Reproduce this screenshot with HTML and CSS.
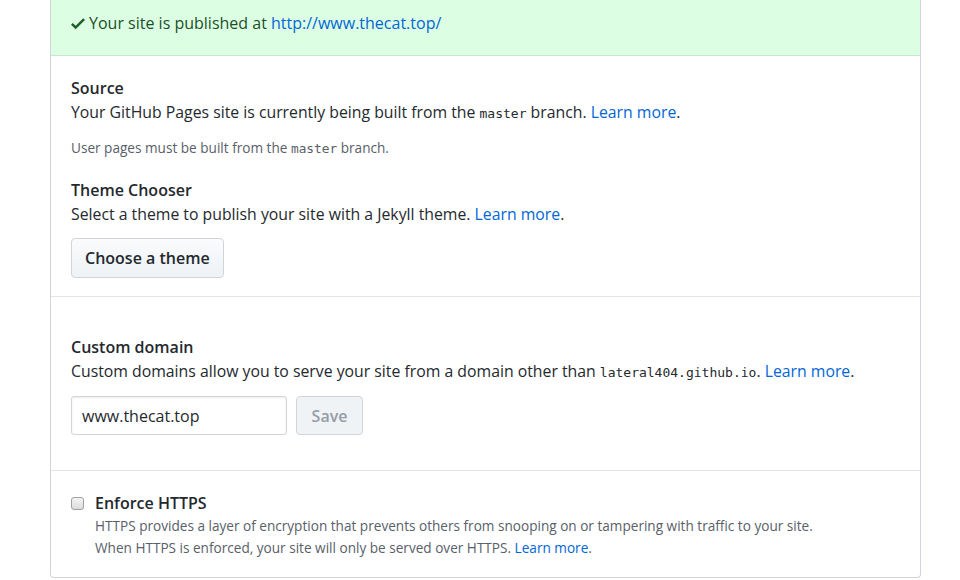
FILE: index.html
```html
<!DOCTYPE html>
<html>
<head>
<meta charset="utf-8">
<link rel="stylesheet" href="styles.css">
</head>
<body>
<div class="box">
  <div class="flash">
    <svg class="check" width="14" height="19" viewBox="0 0 12 16"><path d="M12 5l-8 8-4-4 1.5-1.5L4 10l6.5-6.5L12 5z"/></svg>
    <span>Your site is published at <a href="#">http://www.thecat.top/</a></span>
  </div>
  <div class="section s1">
    <h3 class="title">Source</h3>
    <p class="text">Your GitHub Pages site is currently being built from the <code>master</code> branch. <a href="#">Learn more</a>.</p>
    <p class="note">User pages must be built from the <code>master</code> branch.</p>
    <h3 class="title t2">Theme Chooser</h3>
    <p class="text">Select a theme to publish your site with a Jekyll theme. <a href="#">Learn more</a>.</p>
    <button class="btn">Choose a theme</button>
  </div>
  <div class="section s2">
    <h3 class="title">Custom domain</h3>
    <p class="text">Custom domains allow you to serve your site from a domain other than <code>lateral404.github.io</code>. <a href="#">Learn more</a>.</p>
    <div class="form-row">
      <input class="input" type="text" value="www.thecat.top">
      <button class="btn btn-save" disabled>Save</button>
    </div>
  </div>
  <div class="section s3">
    <div class="check-row">
      <span class="checkbox"></span>
      <div>
        <h3 class="title">Enforce HTTPS</h3>
        <p class="note2">HTTPS provides a layer of encryption that prevents others from snooping on or tampering with traffic to your site.<br>When HTTPS is enforced, your site will only be served over HTTPS. <a href="#">Learn more</a>.</p>
      </div>
    </div>
  </div>
</div>
</body>
</html>
```
FILE: styles.css
```css
* { box-sizing: border-box; }
body {
  margin: 0;
  background: #fff;
  font-family: "Open Sans", "Noto Sans", sans-serif;
  color: #24292e;
  font-size: 16px;
}
a { color: #0366d6; text-decoration: none; }
code { font-family: "DejaVu Sans Mono", "Liberation Mono", monospace; font-size: 13px; }
.box {
  margin-left: 50px;
  width: 871px;
  height: 578px;
  border: 1px solid #d1d5da;
  border-top: 0;
  border-radius: 0 0 4px 4px;
  overflow: hidden;
}
.flash {
  background: #dcffe4;
  color: #1d4f28;
  border-bottom: 1px solid #c9e6cf;
  height: 56px;
  padding: 0 20px 10px;
  display: flex;
  align-items: center;
  gap: 4px;
  line-height: 24px;
}
.check { flex: none; margin-top: 1px; fill: #1f5e2b; }
.section { padding: 20px 20px 0; border-bottom: 1px solid #e1e4e8; }
.s1 { height: 241px; }
.s2 { height: 174px; padding-top: 38px; }
.s3 { border-bottom: 0; padding-top: 20px; }
.title { margin: 0; font-size: 16px; font-weight: 600; line-height: 24px; }
.t2 { margin-top: 19px; }
.text { margin: 0; line-height: 24px; font-size: 15.8px; }
.text code { font-size: 13px; }
.note { margin: 12px 0 0; font-size: 13.6px; color: #586069; line-height: 20px; }
.note code { font-size: 12.8px; }
.btn {
  margin-top: 12px;
  height: 40px;
  padding: 0 13px;
  font-family: inherit;
  font-size: 16px;
  font-weight: 600;
  color: #24292e;
  background: linear-gradient(#fafbfc, #eff3f6 90%);
  border: 1px solid #d1d5da;
  border-radius: 4px;
}
.form-row { display: flex; gap: 9px; margin-top: 11px; }
.input {
  width: 216px;
  height: 39px;
  padding: 0 10px;
  font-family: inherit;
  font-size: 16px;
  color: #24292e;
  border: 1px solid #d1d5da;
  border-radius: 3px;
  box-shadow: inset 0 1px 2px rgba(27,31,35,0.075);
}
.btn-save {
  margin-top: 0;
  height: 39px;
  width: 67px;
  padding: 0;
  color: #959da5;
  background: #eff3f6;
  border-color: #d1d5da;
}
.check-row { display: flex; gap: 11px; }
.checkbox {
  flex: none;
  width: 13px;
  height: 13px;
  margin-top: 6px;
  border: 1px solid #a0a0a0;
  border-radius: 3px;
  background: linear-gradient(#f4f4f4, #dcdcdc);
}
.note2 { margin: 0; font-size: 13.6px; color: #586069; line-height: 22px; }
```
